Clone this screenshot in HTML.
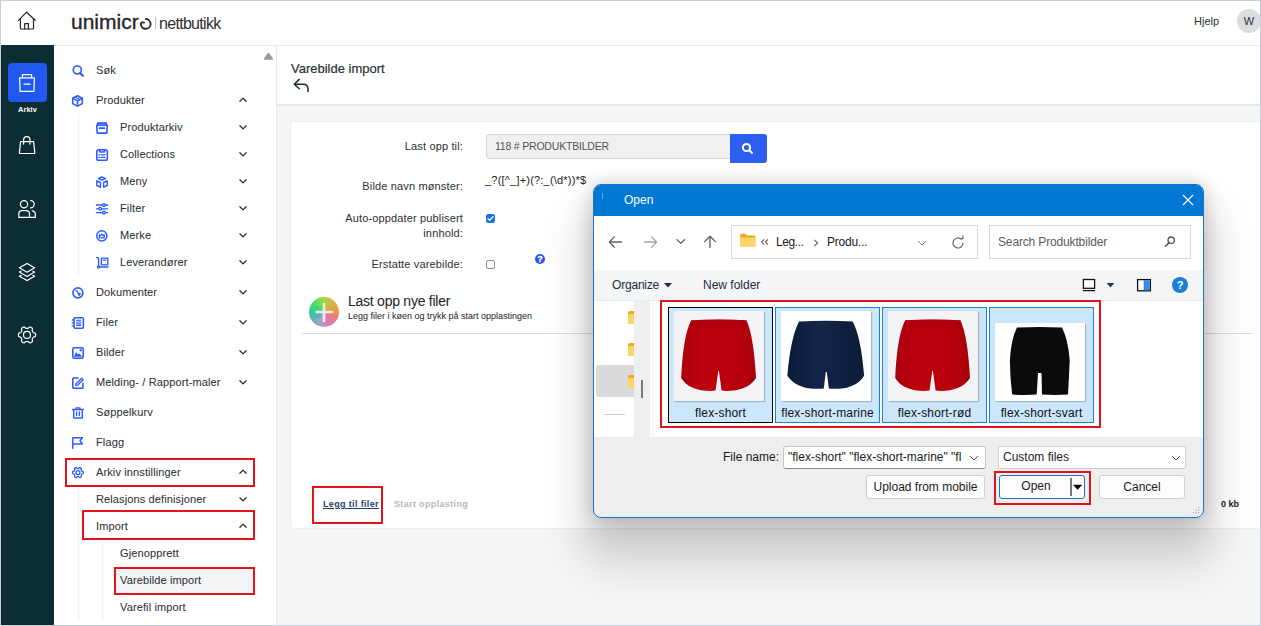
<!DOCTYPE html>
<html><head><meta charset="utf-8">
<style>
*{box-sizing:border-box;margin:0;padding:0}
html,body{width:1261px;height:626px;overflow:hidden;background:#fff}
body{font-family:"Liberation Sans",sans-serif;position:relative;color:#2b3035}
.a{position:absolute}
#frame{position:absolute;left:0;top:0;width:1261px;height:626px;border:1px solid #c9ced6;pointer-events:none;z-index:100}
#hdr{left:1px;top:1px;width:1259px;height:45px;background:#fff;border-bottom:1px solid #eaebec}
#side{left:1px;top:45px;width:53px;height:580px;background:#0d2d34}
#menu{left:54px;top:46px;width:223px;height:579px;background:#fff;border-right:1px solid #e8e9eb}
#main{left:277px;top:46px;width:983px;height:579px;background:#f4f5f7}
.mi{position:absolute;font-size:11px;line-height:14px;color:#2b3035;white-space:nowrap;letter-spacing:0.12px;-webkit-text-stroke:0.05px #2b3035}
.ic{position:absolute}
.chev{position:absolute;width:12px;height:12px}
</style></head><body>
<div id="frame"></div>
<svg width="0" height="0" style="position:absolute"><defs>
<linearGradient id="gr" x1="0" y1="0" x2="1" y2="0"><stop offset="0" stop-color="#aa000c"/><stop offset="0.3" stop-color="#bd000e"/><stop offset="0.7" stop-color="#ba000d"/><stop offset="1" stop-color="#a8000b"/></linearGradient>
<linearGradient id="gn" x1="0" y1="0" x2="1" y2="0"><stop offset="0" stop-color="#0b1a36"/><stop offset="0.4" stop-color="#13254a"/><stop offset="1" stop-color="#0c1b38"/></linearGradient>
</defs></svg>


<!-- HEADER -->
<div id="hdr" class="a">
</div>
<svg class="a" style="left:0;top:0" width="60" height="45" viewBox="0 0 60 45">
 <g fill="none" stroke="#262626" stroke-width="1.2" stroke-linecap="round" stroke-linejoin="round">
  <path d="M18.5 20.3 L26.6 12.2 L35.2 20.3"/>
  <path d="M20.4 18.6 V28.2 Q20.4 29 21.2 29 H32.7 Q33.5 29 33.5 28.2 V18.6"/>
  <path d="M24.7 29 V23.6 H28.4 V29"/>
 </g>
</svg>
<div class="a" style="left:71px;top:10px;font-size:21px;color:#262626;-webkit-text-stroke:0.35px #262626;line-height:24px">unimicr</div>
<svg class="a" style="left:138px;top:15px" width="16" height="16" viewBox="0 0 16 16"><path d="M7.9 4.0 A4.9 4.9 0 1 1 2.8 9.1 Q3.0 6.8 6.1 7.6" fill="none" stroke="#262626" stroke-width="1.85" stroke-linecap="round"/></svg>
<div class="a" style="left:155px;top:17px;width:1px;height:12px;background:#bdbdbd"></div>
<div class="a" style="left:159px;top:15px;font-size:16px;color:#303030;letter-spacing:-0.7px;line-height:18px">nettbutikk</div>
<div class="a" style="left:1194px;top:14px;font-size:11px;color:#2b3035;line-height:14px">Hjelp</div>
<div class="a" style="left:1237px;top:9px;width:24px;height:24px;border-radius:12px;background:#dcdde0;font-size:11px;line-height:24px;text-align:center;color:#2b3035">W</div>

<!-- SIDEBAR -->
<div id="side" class="a"></div>

<div class="a" style="left:8px;top:63px;width:39px;height:39px;border-radius:4px;background:#2358f0"></div>
<svg class="a" style="left:0;top:45px" width="54" height="320" viewBox="0 45 54 320">
 <g fill="none" stroke="#fff" stroke-width="1.2" stroke-linecap="round" stroke-linejoin="round">
  <!-- archive -->
  <path d="M22.4 77.6 V74.6 H31.6 V77.6"/>
  <path d="M19.6 77.8 H34.4 L33.9 91.4 H20.1 Z"/>
  <path d="M24 84.2 H30"/>
  <!-- bag -->
  <path d="M23.6 144.2 V140 Q23.6 136.6 26.8 136.6 Q30 136.6 30 140 V144.2"/>
  <path d="M20.6 141.6 H33.6 L34.8 152.6 Q34.9 153.5 34 153.5 H20.2 Q19.3 153.5 19.4 152.6 Z"/>
  <!-- users -->
  <circle cx="24" cy="204.2" r="3.6"/>
  <path d="M30.6 200.6 A3.6 3.6 0 0 1 30.6 207.8"/>
  <path d="M18.8 217.4 V213.8 Q18.8 210.6 22 210.6 H26.3 Q29.5 210.6 29.5 213.8 V217.4 Z"/>
  <path d="M32.2 210.8 Q35.3 211.2 35.3 214 V217.4 H29.5"/>
  <!-- layers -->
  <path d="M27 263.4 L34.6 267.8 L27 272.2 L19.4 267.8 Z"/>
  <path d="M21 271.2 L19.4 272 L27 276.4 L34.6 272 L33 271.2"/>
  <path d="M21 275.4 L19.4 276.2 L27 280.6 L34.6 276.2 L33 275.4"/>
  <!-- gear -->
  <path d="M35.60 334.90 L35.58 335.46 L35.48 336.02 L35.19 336.53 L34.34 336.87 L33.48 337.10 L33.14 337.44 L32.92 337.82 L32.72 338.20 L32.49 338.57 L32.27 338.94 L32.15 339.41 L32.37 340.27 L32.51 341.18 L32.21 341.69 L31.77 342.05 L31.30 342.35 L30.80 342.61 L30.27 342.80 L29.68 342.81 L28.97 342.24 L28.34 341.62 L27.87 341.49 L27.43 341.49 L27.00 341.50 L26.57 341.49 L26.13 341.49 L25.66 341.62 L25.03 342.24 L24.32 342.81 L23.73 342.80 L23.20 342.61 L22.70 342.35 L22.23 342.05 L21.79 341.69 L21.49 341.18 L21.63 340.27 L21.85 339.41 L21.73 338.94 L21.51 338.57 L21.28 338.20 L21.08 337.82 L20.86 337.44 L20.52 337.10 L19.66 336.87 L18.81 336.53 L18.52 336.02 L18.42 335.46 L18.40 334.90 L18.42 334.34 L18.52 333.78 L18.81 333.27 L19.66 332.93 L20.52 332.70 L20.86 332.36 L21.08 331.98 L21.28 331.60 L21.51 331.23 L21.73 330.86 L21.85 330.39 L21.63 329.53 L21.49 328.62 L21.79 328.11 L22.23 327.75 L22.70 327.45 L23.20 327.19 L23.73 327.00 L24.32 326.99 L25.03 327.56 L25.66 328.18 L26.13 328.31 L26.57 328.31 L27.00 328.30 L27.43 328.31 L27.87 328.31 L28.34 328.18 L28.97 327.56 L29.68 326.99 L30.27 327.00 L30.80 327.19 L31.30 327.45 L31.77 327.75 L32.21 328.11 L32.51 328.62 L32.37 329.53 L32.15 330.39 L32.27 330.86 L32.49 331.23 L32.72 331.60 L32.92 331.98 L33.14 332.36 L33.48 332.70 L34.34 332.93 L35.19 333.27 L35.48 333.78 L35.58 334.34 Z"/>
  <circle cx="27" cy="334.9" r="3.5"/>
 </g>
</svg>
<div class="a" style="left:8px;top:105px;width:39px;text-align:center;font-size:7.5px;font-weight:bold;color:#fff;line-height:10px">Arkiv</div>

<div id="menu" class="a"></div>
<div id="main" class="a"></div>

<!-- menu lines -->
<div class="a" style="left:78px;top:114px;width:1px;height:162px;background:#eef0f3"></div>
<div class="a" style="left:78px;top:487px;width:1px;height:134px;background:#eef0f3"></div>
<div class="a" style="left:102px;top:540px;width:1px;height:81px;background:#eef0f3"></div>
<div class="a" style="left:115px;top:568px;width:139px;height:26px;background:#f3f4f6"></div>
<svg class="a" style="left:262px;top:51px" width="12" height="10" viewBox="0 0 12 10"><path d="M2.6 7.9 L6.6 2.6 L10.4 7.9 Z" fill="#9a9a9a" stroke="#9a9a9a" stroke-width="1.6" stroke-linejoin="round"/></svg>
<!--MENU-->
<div class="mi" style="left:96px;top:63px">Søk</div>
<svg class="ic" style="left:72px;top:65px;overflow:visible" width="12" height="12" viewBox="0 0 12 12"><g fill="none" stroke="#2e5bff" stroke-width="1.57" stroke-linecap="round" stroke-linejoin="round"><circle cx="5.3" cy="5.0" r="4.0" stroke-width="1.68"/><path d="M8.3 8.1 L10.9 10.7" stroke-width="2.24"/></g></svg>
<div class="mi" style="left:96px;top:93px">Produkter</div>
<svg class="ic" style="left:72px;top:95px;overflow:visible" width="12" height="12" viewBox="0 0 12 12"><g fill="none" stroke="#2e5bff" stroke-width="1.57" stroke-linecap="round" stroke-linejoin="round"><path d="M5.5 0.8 L10.3 3.3 V8.6 L5.5 11.1 L0.7 8.6 V3.3 Z"/><path d="M0.9 3.4 L5.5 5.9 L10.1 3.4 M5.5 5.9 V11"/><path d="M3.3 2.1 L7.9 4.6" stroke-width="1.23"/></g></svg>
<svg class="ic" style="left:238px;top:96px" width="10" height="8" viewBox="0 0 10 8"><path d="M1.9 5.2 L5 2.1 L8.1 5.2" fill="none" stroke="#2a2d31" stroke-width="1.3" stroke-linecap="round" stroke-linejoin="round"/></svg>
<div class="mi" style="left:120px;top:120px">Produktarkiv</div>
<svg class="ic" style="left:96px;top:122px;overflow:visible" width="12" height="12" viewBox="0 0 12 12"><g fill="none" stroke="#2e5bff" stroke-width="1.57" stroke-linecap="round" stroke-linejoin="round"><rect x="1.6" y="1.1" width="8.8" height="2.1" rx="0.3"/><path d="M0.7 3.3 H11.3 L10.8 11.1 H1.2 Z"/><path d="M3.6 6.2 H8.4" stroke-width="1.68"/></g></svg>
<svg class="ic" style="left:238px;top:123px" width="10" height="8" viewBox="0 0 10 8"><path d="M1.9 2.8 L5 5.9 L8.1 2.8" fill="none" stroke="#2a2d31" stroke-width="1.3" stroke-linecap="round" stroke-linejoin="round"/></svg>
<div class="mi" style="left:120px;top:147px">Collections</div>
<svg class="ic" style="left:96px;top:149px;overflow:visible" width="12" height="12" viewBox="0 0 12 12"><g fill="none" stroke="#2e5bff" stroke-width="1.57" stroke-linecap="round" stroke-linejoin="round"><rect x="0.8" y="0.8" width="10.5" height="10.5" rx="1.8"/><path d="M3.6 1 V2.4 Q3.6 3 4.2 3 H7.9 Q8.5 3 8.5 2.4 V1"/><path d="M5 5.8 H9 M5 8.3 H9 M2.9 5.8 H3.5 M2.9 8.3 H3.5" stroke-width="1.34"/></g></svg>
<svg class="ic" style="left:238px;top:150px" width="10" height="8" viewBox="0 0 10 8"><path d="M1.9 2.8 L5 5.9 L8.1 2.8" fill="none" stroke="#2a2d31" stroke-width="1.3" stroke-linecap="round" stroke-linejoin="round"/></svg>
<div class="mi" style="left:120px;top:174px">Meny</div>
<svg class="ic" style="left:96px;top:176px;overflow:visible" width="12" height="12" viewBox="0 0 12 12"><g fill="none" stroke="#2e5bff" stroke-width="1.57" stroke-linecap="round" stroke-linejoin="round"><path d="M5.9 1.0 L9.5 2.6 L5.9 4.2 L2.3 2.6 Z" stroke-width="1.46"/><path d="M0.8 4.8 L4.4 6.5 V11.2 L0.8 9.5 Z" stroke-width="1.46"/><path d="M11.2 4.8 L7.6 6.5 V11.2 L11.2 9.5 Z" stroke-width="1.46"/></g></svg>
<svg class="ic" style="left:238px;top:177px" width="10" height="8" viewBox="0 0 10 8"><path d="M1.9 2.8 L5 5.9 L8.1 2.8" fill="none" stroke="#2a2d31" stroke-width="1.3" stroke-linecap="round" stroke-linejoin="round"/></svg>
<div class="mi" style="left:120px;top:201px">Filter</div>
<svg class="ic" style="left:96px;top:203px;overflow:visible" width="12" height="12" viewBox="0 0 12 12"><g fill="none" stroke="#2e5bff" stroke-width="1.57" stroke-linecap="round" stroke-linejoin="round"><path d="M0.4 2 H11.6 M0.4 5.8 H11.6 M0.4 9.6 H11.6" stroke-width="1.34"/><circle cx="7.8" cy="2" r="1.4" fill="#fff" stroke-width="1.34"/><circle cx="4.2" cy="5.8" r="1.4" fill="#fff" stroke-width="1.34"/><circle cx="8" cy="9.6" r="1.4" fill="#fff" stroke-width="1.34"/></g></svg>
<svg class="ic" style="left:238px;top:204px" width="10" height="8" viewBox="0 0 10 8"><path d="M1.9 2.8 L5 5.9 L8.1 2.8" fill="none" stroke="#2a2d31" stroke-width="1.3" stroke-linecap="round" stroke-linejoin="round"/></svg>
<div class="mi" style="left:120px;top:228px">Merke</div>
<svg class="ic" style="left:96px;top:230px;overflow:visible" width="12" height="12" viewBox="0 0 12 12"><g fill="none" stroke="#2e5bff" stroke-width="1.57" stroke-linecap="round" stroke-linejoin="round"><circle cx="5.8" cy="5.8" r="5.1" stroke-width="1.46"/><path d="M3.4 7.9 V4.6 L4.7 5.7 L5.8 4 L6.9 5.7 L8.2 4.6 V7.9 Z" stroke-width="1.23"/></g></svg>
<svg class="ic" style="left:238px;top:231px" width="10" height="8" viewBox="0 0 10 8"><path d="M1.9 2.8 L5 5.9 L8.1 2.8" fill="none" stroke="#2a2d31" stroke-width="1.3" stroke-linecap="round" stroke-linejoin="round"/></svg>
<div class="mi" style="left:120px;top:255px">Leverandører</div>
<svg class="ic" style="left:96px;top:257px;overflow:visible" width="12" height="12" viewBox="0 0 12 12"><g fill="none" stroke="#2e5bff" stroke-width="1.57" stroke-linecap="round" stroke-linejoin="round"><path d="M0.5 0.6 H1.5 Q2.6 0.6 2.6 1.7 V8.8" stroke-width="1.34"/><circle cx="2.6" cy="10" r="1.1" stroke-width="1.34"/><path d="M3.8 10 H12" stroke-width="1.34"/><rect x="5.4" y="1.2" width="6.4" height="6.6" stroke-width="1.34"/><path d="M7.4 3.2 H9.8" stroke-width="1.34"/></g></svg>
<svg class="ic" style="left:238px;top:258px" width="10" height="8" viewBox="0 0 10 8"><path d="M1.9 2.8 L5 5.9 L8.1 2.8" fill="none" stroke="#2a2d31" stroke-width="1.3" stroke-linecap="round" stroke-linejoin="round"/></svg>
<div class="mi" style="left:96px;top:285px">Dokumenter</div>
<svg class="ic" style="left:72px;top:287px;overflow:visible" width="12" height="12" viewBox="0 0 12 12"><g fill="none" stroke="#2e5bff" stroke-width="1.57" stroke-linecap="round" stroke-linejoin="round"><circle cx="5.9" cy="5.8" r="5" stroke-width="1.68"/><path d="M3.9 3.6 Q4.8 3.6 5.4 4.4" stroke-width="1.34"/><path d="M5.6 5.4 L8.4 6.8 L7 8.6 Z" fill="#2e5bff" stroke-width="1.01"/></g></svg>
<svg class="ic" style="left:238px;top:288px" width="10" height="8" viewBox="0 0 10 8"><path d="M1.9 2.8 L5 5.9 L8.1 2.8" fill="none" stroke="#2a2d31" stroke-width="1.3" stroke-linecap="round" stroke-linejoin="round"/></svg>
<div class="mi" style="left:96px;top:315px">Filer</div>
<svg class="ic" style="left:72px;top:317px;overflow:visible" width="12" height="12" viewBox="0 0 12 12"><g fill="none" stroke="#2e5bff" stroke-width="1.57" stroke-linecap="round" stroke-linejoin="round"><rect x="2" y="0.7" width="9.4" height="10.6" rx="1.2" stroke-width="1.57"/><path d="M0.3 3 H2 M0.3 5.9 H2 M0.3 8.8 H2" stroke-width="1.34"/><path d="M4.6 3.3 H8.8 M4.6 5 H8.8 M4.6 6.7 H8.8 M4.6 8.4 H8.8" stroke-width="1.12"/></g></svg>
<svg class="ic" style="left:238px;top:318px" width="10" height="8" viewBox="0 0 10 8"><path d="M1.9 2.8 L5 5.9 L8.1 2.8" fill="none" stroke="#2a2d31" stroke-width="1.3" stroke-linecap="round" stroke-linejoin="round"/></svg>
<div class="mi" style="left:96px;top:345px">Bilder</div>
<svg class="ic" style="left:72px;top:347px;overflow:visible" width="12" height="12" viewBox="0 0 12 12"><g fill="none" stroke="#2e5bff" stroke-width="1.57" stroke-linecap="round" stroke-linejoin="round"><rect x="0.8" y="0.8" width="10.4" height="10.4" rx="1.4" stroke-width="1.57"/><path d="M2.4 9.4 L4.1 5.6 L5.8 8 L7.3 6.6 L9.6 9.4 Z" fill="#2e5bff" stroke-width="0.67"/><circle cx="8.6" cy="3.2" r="0.9" fill="#2e5bff" stroke-width="0.56"/></g></svg>
<svg class="ic" style="left:238px;top:348px" width="10" height="8" viewBox="0 0 10 8"><path d="M1.9 2.8 L5 5.9 L8.1 2.8" fill="none" stroke="#2a2d31" stroke-width="1.3" stroke-linecap="round" stroke-linejoin="round"/></svg>
<div class="mi" style="left:96px;top:375px">Melding- / Rapport-maler</div>
<svg class="ic" style="left:72px;top:377px;overflow:visible" width="12" height="12" viewBox="0 0 12 12"><g fill="none" stroke="#2e5bff" stroke-width="1.57" stroke-linecap="round" stroke-linejoin="round"><path d="M6 1 H1.6 Q0.8 1 0.8 1.8 V10.4 Q0.8 11.2 1.6 11.2 H10.2 Q11 11.2 11 10.4 V6.2" stroke-width="1.57"/><path d="M3.7 8.5 L4.1 6.7 L9.6 1.2 L11.1 2.7 L5.6 8.2 Z" stroke-width="1.34"/></g></svg>
<svg class="ic" style="left:238px;top:378px" width="10" height="8" viewBox="0 0 10 8"><path d="M1.9 2.8 L5 5.9 L8.1 2.8" fill="none" stroke="#2a2d31" stroke-width="1.3" stroke-linecap="round" stroke-linejoin="round"/></svg>
<div class="mi" style="left:96px;top:405px">Søppelkurv</div>
<svg class="ic" style="left:72px;top:407px;overflow:visible" width="12" height="12" viewBox="0 0 12 12"><g fill="none" stroke="#2e5bff" stroke-width="1.57" stroke-linecap="round" stroke-linejoin="round"><path d="M0.6 2.6 H11.4" stroke-width="1.46"/><path d="M4 2.4 V0.8 H8 V2.4" stroke-width="1.34"/><path d="M1.7 2.8 V10.4 Q1.7 11.1 2.4 11.1 H9.6 Q10.3 11.1 10.3 10.4 V2.8" stroke-width="1.46"/><path d="M4.6 5 V8.6 M7.4 5 V8.6" stroke-width="1.34"/></g></svg>
<div class="mi" style="left:96px;top:435px">Flagg</div>
<svg class="ic" style="left:72px;top:437px;overflow:visible" width="12" height="12" viewBox="0 0 12 12"><g fill="none" stroke="#2e5bff" stroke-width="1.57" stroke-linecap="round" stroke-linejoin="round"><path d="M0.8 11.4 V0.7 H10.4 L8 3.8 L10.4 7 H0.8" stroke-width="1.46"/></g></svg>
<div class="mi" style="left:96px;top:465px">Arkiv innstillinger</div>
<svg class="ic" style="left:72px;top:467px;overflow:visible" width="12" height="12" viewBox="0 0 12 12"><g fill="none" stroke="#2e5bff" stroke-width="1.57" stroke-linecap="round" stroke-linejoin="round"><path d="M11.30 5.60 L11.27 6.07 L11.13 6.52 L10.49 6.83 L9.84 7.03 L9.62 7.34 L9.45 7.65 L9.27 7.96 L9.11 8.29 L9.26 8.96 L9.31 9.67 L8.99 10.02 L8.60 10.28 L8.18 10.49 L7.72 10.59 L7.13 10.19 L6.63 9.73 L6.26 9.69 L5.90 9.70 L5.54 9.69 L5.17 9.73 L4.67 10.19 L4.08 10.59 L3.62 10.49 L3.20 10.28 L2.81 10.02 L2.49 9.67 L2.54 8.96 L2.69 8.29 L2.53 7.96 L2.35 7.65 L2.18 7.34 L1.96 7.03 L1.31 6.83 L0.67 6.52 L0.53 6.07 L0.50 5.60 L0.53 5.13 L0.67 4.68 L1.31 4.37 L1.96 4.17 L2.18 3.86 L2.35 3.55 L2.53 3.24 L2.69 2.91 L2.54 2.24 L2.49 1.53 L2.81 1.18 L3.20 0.92 L3.62 0.71 L4.08 0.61 L4.67 1.01 L5.17 1.47 L5.54 1.51 L5.90 1.50 L6.26 1.51 L6.63 1.47 L7.13 1.01 L7.72 0.61 L8.18 0.71 L8.60 0.92 L8.99 1.18 L9.31 1.53 L9.26 2.24 L9.11 2.91 L9.27 3.24 L9.45 3.55 L9.62 3.86 L9.84 4.17 L10.49 4.37 L11.13 4.68 L11.27 5.13 Z" stroke-width="1.34"/><circle cx="5.9" cy="5.6" r="2" stroke-width="1.34"/></g></svg>
<svg class="ic" style="left:238px;top:468px" width="10" height="8" viewBox="0 0 10 8"><path d="M1.9 5.2 L5 2.1 L8.1 5.2" fill="none" stroke="#2a2d31" stroke-width="1.3" stroke-linecap="round" stroke-linejoin="round"/></svg>
<div class="mi" style="left:96px;top:492px">Relasjons definisjoner</div>
<svg class="ic" style="left:238px;top:495px" width="10" height="8" viewBox="0 0 10 8"><path d="M1.9 2.8 L5 5.9 L8.1 2.8" fill="none" stroke="#2a2d31" stroke-width="1.3" stroke-linecap="round" stroke-linejoin="round"/></svg>
<div class="mi" style="left:96px;top:519px">Import</div>
<svg class="ic" style="left:238px;top:522px" width="10" height="8" viewBox="0 0 10 8"><path d="M1.9 5.2 L5 2.1 L8.1 5.2" fill="none" stroke="#2a2d31" stroke-width="1.3" stroke-linecap="round" stroke-linejoin="round"/></svg>
<div class="mi" style="left:120px;top:546px">Gjenopprett</div>
<div class="mi" style="left:120px;top:573px">Varebilde import</div>
<div class="mi" style="left:120px;top:600px">Varefil import</div>
<!--/MENU-->

<div class="a" style="left:277px;top:46px;width:983px;height:58px;background:#fff"></div>
<div class="a" style="left:277px;top:104px;width:983px;height:1px;background:#e3e5e6"></div>
<div class="a" style="left:277px;top:105px;width:983px;height:1px;background:#e9ebec"></div>
<div class="a" style="left:291px;top:61px;font-size:13px;line-height:16px;color:#2b3035;-webkit-text-stroke:0.2px #2b3035">Varebilde import</div>
<svg class="a" style="left:286px;top:74px" width="30" height="24" viewBox="0 0 30 24"><g fill="none" stroke="#1f2b33" stroke-width="1.5" stroke-linecap="round" stroke-linejoin="round"><path d="M13.2 5.4 L8.3 10.2 L13.2 14.8"/><path d="M8.8 10.2 H17.2 Q22 10.2 22 15 V17.5"/></g></svg>
<!-- card -->
<div class="a" style="left:290px;top:121px;width:975px;height:408px;background:#fff;border:1px solid #eceef0;border-radius:4px"></div>
<div class="a" style="left:300px;top:139px;width:163px;text-align:right;font-size:11px;line-height:14px;color:#2b3035;letter-spacing:0.15px">Last opp til:</div>
<div class="a" style="left:300px;top:179px;width:163px;text-align:right;font-size:11px;line-height:14px;color:#2b3035;letter-spacing:0.15px">Bilde navn mønster:</div>
<div class="a" style="left:300px;top:211px;width:163px;text-align:right;font-size:11px;line-height:14.5px;color:#2b3035;letter-spacing:0.15px">Auto-oppdater publisert<br>innhold:</div>
<div class="a" style="left:300px;top:257px;width:163px;text-align:right;font-size:11px;line-height:14px;color:#2b3035;letter-spacing:0.15px">Erstatte varebilde:</div>
<div class="a" style="left:486px;top:134px;width:245px;height:25px;background:#f0f0f1;border:1px solid #d5d7da;border-radius:3px 0 0 3px"></div>
<div class="a" style="left:495px;top:139px;font-size:10.5px;line-height:14px;color:#50555a;letter-spacing:-0.2px">118 # PRODUKTBILDER</div>
<div class="a" style="left:730px;top:134px;width:37px;height:29px;background:#2d5ef2;border-radius:0 3px 3px 0"></div>
<svg class="a" style="left:740px;top:141px" width="16" height="15" viewBox="0 0 16 15"><g fill="none" stroke="#fff" stroke-width="2" stroke-linecap="round"><circle cx="6.5" cy="6.5" r="3.6"/><path d="M9.3 9.3 L12 12"/></g></svg>
<div class="a" style="left:485px;top:173px;font-size:11px;line-height:14px;color:#222;letter-spacing:0.2px">_?([^_]+)(?:_(\d*))*$</div>
<div class="a" style="left:486px;top:214px;width:9px;height:9px;background:#1f6fe6;border-radius:2px"></div>
<svg class="a" style="left:486px;top:214px" width="9" height="9" viewBox="0 0 9 9"><path d="M2 4.6 L3.7 6.3 L7 2.6" fill="none" stroke="#fff" stroke-width="1.3" stroke-linecap="round" stroke-linejoin="round"/></svg>
<div class="a" style="left:486px;top:260px;width:9px;height:9px;background:#fff;border:1px solid #8c8c8c;border-radius:2px"></div>
<div class="a" style="left:535px;top:254px;width:10px;height:10px;border-radius:5px;background:#2a55e6;color:#fff;font-size:9px;font-weight:bold;line-height:10px;text-align:center;-webkit-text-stroke:0.3px #fff">?</div>
<!-- upload section -->
<div class="a" style="left:309px;top:297px;width:30px;height:30px;border-radius:15px;background:conic-gradient(from 0deg,#a8d840 0deg,#d2b648 40deg,#e8984c 85deg,#e47a88 125deg,#de78b8 155deg,#b49ccc 195deg,#60b4b8 235deg,#34c8a4 270deg,#44dc64 310deg,#a8d840 360deg)"></div>
<svg class="a" style="left:309px;top:297px" width="30" height="30" viewBox="0 0 30 30"><path d="M15 7 V24 M7.5 15 H23" stroke="#ececf0" stroke-width="2.6" stroke-linecap="round"/></svg>
<div class="a" style="left:348px;top:293px;font-size:14px;line-height:16px;color:#222;letter-spacing:-0.25px">Last opp nye filer</div>
<div class="a" style="left:348px;top:311px;font-size:9px;line-height:11px;color:#222">Legg filer i køen og trykk på start opplastingen</div>
<div class="a" style="left:302px;top:333px;width:951px;height:1px;background:#dcdcdc"></div>
<div class="a" style="left:323px;top:498px;font-size:9px;font-weight:bold;line-height:12px;color:#1f3f6c;text-decoration:underline;letter-spacing:0.35px">Legg til filer</div>
<div class="a" style="left:394px;top:498px;font-size:9px;font-weight:bold;line-height:12px;color:#b8b8b8;letter-spacing:0.35px">Start opplasting</div>
<div class="a" style="left:1221px;top:498px;font-size:9px;font-weight:bold;line-height:12px;color:#222">0 kb</div>
<div class="a" style="left:312px;top:486px;width:71px;height:38px;border:2px solid #e3131b"></div>


<!-- DIALOG -->
<div class="a" style="left:593px;top:184px;width:611px;height:334px;border-radius:8px;box-shadow:0 0 18px 2px rgba(0,0,0,0.15),0 24px 36px 0 rgba(0,0,0,0.10),0 36px 44px 14px rgba(0,0,0,0.11);background:#f0f0f0"></div>
<div class="a" style="left:593px;top:184px;width:611px;height:334px;border-radius:8px;overflow:hidden;border:1px solid #1a73d0;background:#eeeeee">
 <div class="a" style="left:0;top:0;width:609px;height:31px;background:#0078d4"></div>
 <div class="a" style="left:8px;top:8px;width:1px;height:6px;background:#5aa8f0"></div>
 <div class="a" style="left:30px;top:8px;font-size:12px;line-height:15px;color:#fff">Open</div>
 <svg class="a" style="left:588px;top:9px" width="12" height="12" viewBox="0 0 12 12"><path d="M1 1 L11 11 M11 1 L1 11" stroke="#fff" stroke-width="1.2"/></svg>
 <div class="a" style="left:0;top:31px;width:609px;height:54px;background:#fff"></div>
 <svg class="a" style="left:0;top:46px" width="140" height="24" viewBox="0 0 140 24"><g fill="none" stroke-width="1.3" stroke-linecap="round" stroke-linejoin="round">
  <path d="M15.5 11 H27.5 M20.5 5.6 L15.3 11 L20.5 16.4" stroke="#606060"/>
  <path d="M50.5 11 H62.5 M57.5 5.6 L62.7 11 L57.5 16.4" stroke="#a6a6a6"/>
  <path d="M83 8.6 L86.8 12.4 L90.6 8.6" stroke="#5c5c5c"/>
  <path d="M116 5.4 V16.6 M110.6 10.6 L116 5.2 L121.4 10.6" stroke="#5c5c5c"/>
 </g></svg>
 <div class="a" style="left:137px;top:40px;width:247px;height:34px;background:#fff;border:1px solid #d9d9d9"></div>
 <svg class="a" style="left:145px;top:47px" width="18" height="16" viewBox="0 0 18 16"><path d="M1.2 3 Q1.2 1.8 2.4 1.8 H6.4 L8 3.4 H15 Q16.4 3.4 16.4 4.8 V13.6 Q16.4 14.6 15.4 14.6 H2.2 Q1.2 14.6 1.2 13.6 Z" fill="#e9a91c"/><path d="M1.2 5.6 H16.4 V13.6 Q16.4 14.6 15.4 14.6 H2.2 Q1.2 14.6 1.2 13.6 Z" fill="#fcd46a"/></svg>
 <svg class="a" style="left:166px;top:51px" width="10" height="12" viewBox="0 0 10 12"><path d="M4.2 3.4 L1.6 6 L4.2 8.6 M8 3.4 L5.4 6 L8 8.6" fill="none" stroke="#606060" stroke-width="1.1"/></svg>
 <div class="a" style="left:182px;top:50px;font-size:12px;line-height:15px;color:#1b1b1b;letter-spacing:-0.4px">Leg...</div>
 <svg class="a" style="left:218px;top:53px" width="8" height="10" viewBox="0 0 8 10"><path d="M2.5 2 L5.5 5 L2.5 8" fill="none" stroke="#666" stroke-width="1.2"/></svg>
 <div class="a" style="left:233px;top:50px;font-size:12px;line-height:15px;color:#1b1b1b;letter-spacing:-0.2px">Produ...</div>
 <svg class="a" style="left:322px;top:53px" width="12" height="10" viewBox="0 0 12 10"><path d="M2 3 L6 7 L10 3" fill="none" stroke="#777" stroke-width="1"/></svg>
 <svg class="a" style="left:355px;top:49px" width="18" height="18" viewBox="0 0 18 18"><path d="M14 9 A5 5 0 1 1 12.4 5.3" fill="none" stroke="#666" stroke-width="1.2"/><path d="M10.8 4.6 H13.8 V1.6" fill="none" stroke="#666" stroke-width="1.2"/></svg>
 <div class="a" style="left:395px;top:40px;width:202px;height:34px;background:#fff;border:1px solid #d9d9d9"></div>
 <div class="a" style="left:404px;top:50px;font-size:12px;line-height:15px;color:#5c5c5c;letter-spacing:-0.15px">Search Produktbilder</div>
 <svg class="a" style="left:568px;top:49px" width="16" height="16" viewBox="0 0 16 16"><circle cx="9.2" cy="6.2" r="3.2" fill="none" stroke="#555" stroke-width="1.3"/><path d="M7 8.6 L3.4 12.2" stroke="#555" stroke-width="1.5" stroke-linecap="round"/></svg>
 <div class="a" style="left:0;top:85px;width:609px;height:31px;background:#f4f5f7;border-bottom:1px solid #e9eaeb"></div>
 <div class="a" style="left:18px;top:93px;font-size:12px;line-height:15px;color:#1f2d3d;letter-spacing:-0.2px">Organize</div>
 <svg class="a" style="left:69px;top:97px" width="10" height="7" viewBox="0 0 10 7"><path d="M1 1 H9 L5 5.6 Z" fill="#1f2d3d"/></svg>
 <div class="a" style="left:109px;top:93px;font-size:12px;line-height:15px;color:#1f2d3d">New folder</div>
 <svg class="a" style="left:485px;top:92px" width="110" height="20" viewBox="0 0 110 20"><g>
  <rect x="4.4" y="2.5" width="11.2" height="8.8" fill="#fff" stroke="#111" stroke-width="1.3"/>
  <path d="M4 13.6 H16" stroke="#111" stroke-width="1.2"/>
  <path d="M27.6 6 H35.4 L31.5 10.4 Z" fill="#1f3864"/>
  <rect x="58.6" y="2.6" width="12.8" height="11.2" fill="#fff" stroke="#111" stroke-width="1.3"/>
  <rect x="65.2" y="3.2" width="5.6" height="10" fill="#2a8ee6"/>
  <path d="M65.1 3 V13.6" stroke="#333" stroke-width="0.5"/>
 </g></svg>
 <div class="a" style="left:578px;top:92px;width:16px;height:16px;border-radius:8px;background:#1a7dd6;color:#fff;font-size:11px;font-weight:bold;line-height:16px;text-align:center">?</div>
 <!-- content -->
 <div class="a" style="left:0;top:116px;width:609px;height:136px;background:#fff"></div>
 <div class="a" style="left:40px;top:116px;width:16px;height:136px;background:#efefef"></div>
 <div class="a" style="left:58px;top:116px;width:1px;height:136px;background:#f4f4f4"></div>
 <div class="a" style="left:2px;top:180px;width:38px;height:32px;background:#d9dadb;border-radius:3px 0 0 3px"></div>
 <div class="a" style="left:47px;top:195px;width:2px;height:18px;background:#7a7a7a"></div>
 <div class="a" style="left:10px;top:229px;width:21px;height:1px;background:#cfcfcf"></div>
 <div class="a" style="left:34px;top:126px;width:6px;height:13px;background:#fcd46a;border-top:3px solid #f0a90e;border-radius:2px 0 0 1px"></div>
 <div class="a" style="left:34px;top:158px;width:6px;height:13px;background:#fcd46a;border-top:3px solid #f0a90e;border-radius:2px 0 0 1px"></div>
 <div class="a" style="left:34px;top:190px;width:6px;height:13px;background:#fcd46a;border-top:3px solid #f0a90e;border-radius:2px 0 0 1px"></div>
<div class="a" style="left:74px;top:122px;width:105px;height:116px;background:#cce6fb;border:1px solid #000">
 <div class="a" style="left:5px;top:3px;width:90px;height:90px;background:#f3f3f5;box-shadow:1px 1px 1px rgba(120,140,170,0.55)">
  <svg class="a" style="left:0;top:0" width="90" height="90" viewBox="0 0 90 90"><path d="M17.2 9.3 Q45 7.5 72.4 9.3 C77.5 20 80.5 40 82 66.8 C79 72.5 72 77.5 62 79.2 Q54 80.4 47.6 79.6 L44.9 60 L44.3 60 L41.5 79.6 Q35 80.4 27 79.2 C17 77.5 10 72.5 7.2 66.8 C8.5 40 11.5 20 17.2 9.3 Z" fill="url(#gr)"/><path d="M17.2 9.3 Q45 7.5 72.4 9.3 L73.6 17.5 Q45 16 16.2 17.5 Z" fill="#a6000c" opacity="0.55"/><path d="M7.2 66.8 C10 70 12 71.5 14 72.5 L13 69 Z M82 66.8 C79 70 77 71.5 75 72.5 L76 69 Z" fill="#7a0008" opacity="0.6"/></svg>
 </div>
 <div class="a" style="left:0;top:98px;width:103px;text-align:center;font-size:12px;line-height:15px;color:#111;white-space:nowrap;letter-spacing:0.15px">flex-short</div>
</div>
<div class="a" style="left:181px;top:122px;width:105px;height:116px;background:#cce6fb;border:1px solid #1a7fd6">
 <div class="a" style="left:5px;top:3px;width:90px;height:90px;background:#ffffff;box-shadow:1px 1px 1px rgba(120,140,170,0.55)">
  <svg class="a" style="left:0;top:0" width="90" height="90" viewBox="0 0 90 90"><path d="M18 10.5 Q45 9 71.6 10.5 C77 20 81 38 83.1 64.5 C80 70.5 73 75.5 63 77.2 Q54 78.3 47.8 77.6 L45.8 61 L44.8 61 L42.8 77.6 Q36 78.3 27 77.2 C17 75.5 10 70.5 6.4 64.5 C8.5 38 13 20 18 10.5 Z" fill="url(#gn)"/></svg>
 </div>
 <div class="a" style="left:0;top:98px;width:103px;text-align:center;font-size:12px;line-height:15px;color:#111;white-space:nowrap;letter-spacing:0.15px">flex-short-marine</div>
</div>
<div class="a" style="left:288px;top:122px;width:105px;height:116px;background:#cce6fb;border:1px solid #1a7fd6">
 <div class="a" style="left:5px;top:3px;width:90px;height:90px;background:#f3f3f5;box-shadow:1px 1px 1px rgba(120,140,170,0.55)">
  <svg class="a" style="left:0;top:0" width="90" height="90" viewBox="0 0 90 90"><path d="M17.2 9.3 Q45 7.5 72.4 9.3 C77.5 20 80.5 40 82 66.8 C79 72.5 72 77.5 62 79.2 Q54 80.4 47.6 79.6 L44.9 60 L44.3 60 L41.5 79.6 Q35 80.4 27 79.2 C17 77.5 10 72.5 7.2 66.8 C8.5 40 11.5 20 17.2 9.3 Z" fill="url(#gr)"/><path d="M17.2 9.3 Q45 7.5 72.4 9.3 L73.6 17.5 Q45 16 16.2 17.5 Z" fill="#a6000c" opacity="0.55"/><path d="M7.2 66.8 C10 70 12 71.5 14 72.5 L13 69 Z M82 66.8 C79 70 77 71.5 75 72.5 L76 69 Z" fill="#7a0008" opacity="0.6"/></svg>
 </div>
 <div class="a" style="left:0;top:98px;width:103px;text-align:center;font-size:12px;line-height:15px;color:#111;white-space:nowrap;letter-spacing:0.15px">flex-short-rød</div>
</div>
<div class="a" style="left:395px;top:122px;width:105px;height:116px;background:#cce6fb;border:1px solid #1a7fd6">
 <div class="a" style="left:5px;top:15px;width:90px;height:78px;background:#ffffff;box-shadow:1px 1px 1px rgba(120,140,170,0.55)">
  <svg class="a" style="left:0;top:0" width="90" height="78" viewBox="0 0 90 78"><path d="M22 4.5 Q45 3.5 67 4.5 Q73 16 74.7 37 Q74 55 73 71.6 Q60 72.5 47 71.6 L46.5 50 L43 50 L41.7 71.6 Q29 72.5 17.2 71.6 Q15 55 14.9 37 Q16 16 22 4.5 Z" fill="#0b0b0b"/></svg>
 </div>
 <div class="a" style="left:0;top:98px;width:103px;text-align:center;font-size:12px;line-height:15px;color:#111;white-space:nowrap;letter-spacing:0.15px">flex-short-svart</div>
</div>
 <!-- bottom panel -->
 <div class="a" style="left:129px;top:265px;font-size:12px;line-height:15px;color:#1b1b1b">File name:</div>
 <div class="a" style="left:189px;top:261px;width:203px;height:23px;background:#fff;border:1px solid #c4c4c4;border-bottom-color:#8a8a8a;border-radius:3px;overflow:hidden">
  <div class="a" style="left:4px;top:3px;font-size:12px;line-height:15px;color:#1b1b1b;white-space:nowrap">"flex-short" "flex-short-marine" "fl</div>
  <div class="a" style="left:181px;top:0;width:20px;height:21px;background:#fff"></div>
  <svg class="a" style="left:184px;top:6px" width="12" height="10" viewBox="0 0 12 10"><path d="M2 3 L6 7 L10 3" fill="none" stroke="#555" stroke-width="1"/></svg>
 </div>
 <div class="a" style="left:404px;top:261px;width:188px;height:23px;background:#fff;border:1px solid #d0d0d0;border-radius:3px">
  <div class="a" style="left:4px;top:3px;font-size:12px;line-height:15px;color:#1b1b1b">Custom files</div>
  <svg class="a" style="left:171px;top:6px" width="12" height="10" viewBox="0 0 12 10"><path d="M2 3 L6 7 L10 3" fill="none" stroke="#555" stroke-width="1"/></svg>
 </div>
 <div class="a" style="left:272px;top:290px;width:119px;height:24px;background:#fdfdfd;border:1px solid #d0d0d0;border-radius:3px;font-size:12px;line-height:22px;text-align:center;color:#1b1b1b">Upload from mobile</div>
 <div class="a" style="left:405px;top:290px;width:86px;height:24px;background:#fdfdfd;border:1px solid #1a73d0;border-radius:3px"></div>
 <div class="a" style="left:420px;top:293px;width:44px;font-size:12px;line-height:17px;text-align:center;color:#1b1b1b">Open</div>
 <div class="a" style="left:476px;top:293px;width:2px;height:18px;background:#7a7a7a"></div>
 <svg class="a" style="left:478px;top:299px" width="12" height="8" viewBox="0 0 12 8"><path d="M1 0.8 H10.2 L5.6 5.8 Z" fill="#000"/></svg>
 <div class="a" style="left:505px;top:290px;width:86px;height:24px;background:#fdfdfd;border:1px solid #d0d0d0;border-radius:3px;font-size:12px;line-height:22px;text-align:center;color:#1b1b1b">Cancel</div>
 <svg class="a" style="left:597px;top:321px" width="10" height="10" viewBox="0 0 10 10"><g fill="#b0b0b0"><rect x="7" y="1" width="1.2" height="1.2"/><rect x="4.5" y="3.5" width="1.2" height="1.2"/><rect x="7" y="3.5" width="1.2" height="1.2"/><rect x="2" y="6" width="1.2" height="1.2"/><rect x="4.5" y="6" width="1.2" height="1.2"/><rect x="7" y="6" width="1.2" height="1.2"/></g></svg>
</div>
<!-- red boxes dialog -->
<div class="a" style="left:660px;top:300px;width:441px;height:128px;border:2px solid #e3131b"></div>
<div class="a" style="left:994px;top:471px;width:97px;height:34px;border:2px solid #e3131b"></div>

<!-- red boxes menu -->
<div class="a" style="left:65px;top:458px;width:190px;height:29px;border:2px solid #e3131b"></div>
<div class="a" style="left:82px;top:510px;width:173px;height:30px;border:2px solid #e3131b"></div>
<div class="a" style="left:114px;top:567px;width:141px;height:28px;border:2px solid #e3131b"></div>


</body></html>
